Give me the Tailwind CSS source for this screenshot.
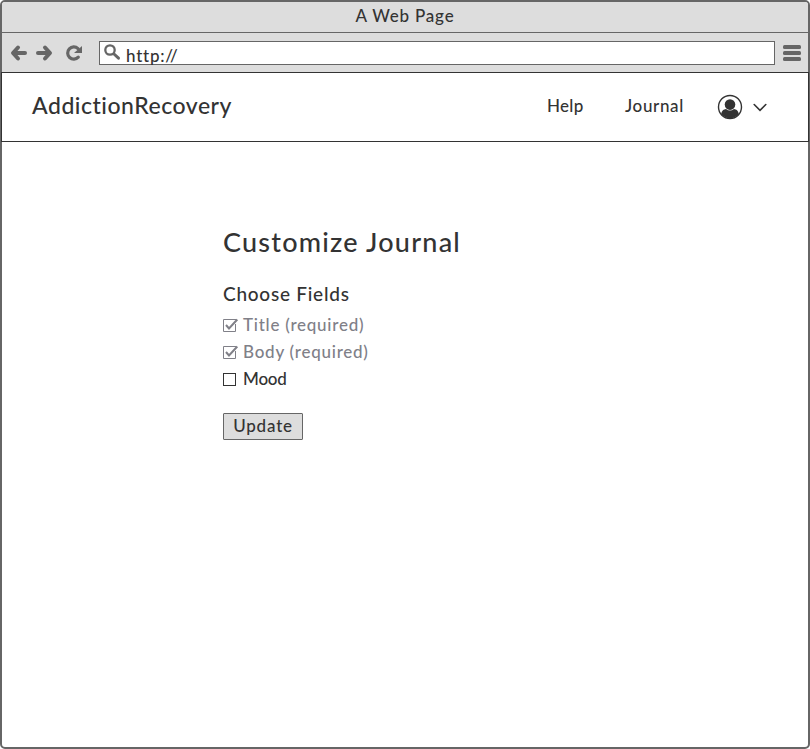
<!DOCTYPE html>
<html lang="en">
<head>
<meta charset="utf-8">
<title>A Web Page</title>
<script src="https://cdn.jsdelivr.net/npm/@tailwindcss/browser@4"></script>
</head>
<body class="bg-white font-['Lato','Open_Sans',sans-serif] font-medium text-[#333]">
<div class="flex h-[749px] w-[810px] flex-col rounded-[5px] border-2 border-[#666] bg-white">
  <div class="flex h-[31px] shrink-0 items-center justify-center rounded-t-[3px] border-b border-[#666] bg-[#ddd] pb-[3px] text-[17px] whitespace-nowrap"><span class="tracking-[0.8px]">A Web Page</span></div>
  <div class="flex h-[39px] shrink-0 items-center bg-[#ddd] pl-2 pr-[6px]">
    <svg class="h-[18px] w-[18px]" viewBox="0 0 18 18" fill="none" stroke="#666" stroke-width="4" stroke-linecap="round"><path d="M4 9H15"/><path d="M8 3.5L3 9L8 14.5" stroke-linejoin="round"/></svg>
    <svg class="ml-[7px] h-[18px] w-[18px]" viewBox="0 0 18 18" fill="none" stroke="#666" stroke-width="4" stroke-linecap="round"><path d="M3 9H14"/><path d="M10 3.5L15 9L10 14.5" stroke-linejoin="round"/></svg>
    <svg class="ml-3 h-[18px] w-[18px]" viewBox="0 0 18 18"><path d="M13.3 13.1A6.1 6.1 0 1 1 13 4.6" fill="none" stroke="#666" stroke-width="3.2" stroke-linecap="round"/><path d="M17 2V9H9Z" fill="#666"/></svg>
    <div class="ml-4 flex h-6 w-[676px] items-center border border-[#666] bg-white pl-1">
      <svg class="h-[18px] w-[18px]" viewBox="0 0 18 18" fill="none" stroke="#666"><circle cx="6" cy="6" r="4.7" stroke-width="2.3"/><path d="M10 10L14.5 14.2" stroke-width="3" stroke-linecap="round"/></svg>
      <span class="ml-1 mt-[6px] text-[17px] leading-5 tracking-[0.75px]">http://</span>
    </div>
    <svg class="ml-2 h-[18px] w-[18px]" viewBox="0 0 18 18" fill="#666"><rect y="1" width="18" height="4" rx="1.5"/><rect y="7" width="18" height="4" rx="1.5"/><rect y="13" width="18" height="4" rx="1.5"/></svg>
  </div>
  <header class="-mx-px flex h-[70px] shrink-0 items-center border border-[#333] bg-white pl-[30px] pr-[41px]">
    <span class="pb-[3px] text-[23px] tracking-[0.52px]">AddictionRecovery</span>
    <nav class="ml-auto flex items-center text-[17px]">
      <span class="w-[78px] pb-[2px] tracking-[0.3px]">Help</span>
      <span class="w-[92px] pb-[2px] tracking-[0.65px]">Journal</span>
      <svg class="h-[26px] w-[26px]" viewBox="0 0 26 26"><circle cx="13" cy="13" r="11.5" fill="#fff" stroke="#333" stroke-width="1.4"/><path d="M4.2 20C4.8 16.3 6.7 15.5 9 15Q13 18.2 17 15C19.3 15.5 21.2 16.3 21.8 20A11.2 11.2 0 0 1 4.2 20Z" fill="#333"/><circle cx="13" cy="10.6" r="5.3" fill="#333"/></svg>
      <svg class="ml-[10px] h-[14px] w-[14px]" viewBox="0 0 14 14" fill="none" stroke="#333" stroke-width="1.6" stroke-linecap="round"><path d="M1.2 4.5L7 10.3L12.8 4.5"/></svg>
    </nav>
  </header>
  <main class="flex flex-col items-start pl-[221px] pt-[82px] whitespace-nowrap">
    <h1 class="h-9 text-[27px] leading-9 tracking-[1.22px]">Customize Journal</h1>
    <h2 class="mt-[22px] h-6 text-[19px] leading-6 tracking-[0.75px]">Choose Fields</h2>
    <div class="mt-[5px] flex h-[27px] items-center text-[17px] text-[#808088]">
      <svg class="h-4 w-[20px]" viewBox="0 0 20 16" fill="none" stroke="#808088"><path d="M12.5 7V14.5H.5V2.5H13"/><path d="M3 8L6 11.5L14.3 2.5" stroke-width="2"/></svg>
      <span class="tracking-[0.75px]">Title (required)</span>
    </div>
    <div class="flex h-[27px] items-center text-[17px] text-[#808088]">
      <svg class="h-4 w-[20px]" viewBox="0 0 20 16" fill="none" stroke="#808088"><path d="M12.5 7V14.5H.5V2.5H13"/><path d="M3 8L6 11.5L14.3 2.5" stroke-width="2"/></svg>
      <span class="tracking-[0.75px]">Body (required)</span>
    </div>
    <div class="flex h-[27px] items-center text-[17px]">
      <svg class="h-4 w-[20px]" viewBox="0 0 20 16" fill="none" stroke="#333"><rect x=".5" y="2.5" width="12" height="12"/></svg>
      <span class="tracking-[-0.2px]">Mood</span>
    </div>
    <button class="mt-[21px] flex h-[27px] w-20 items-center justify-center rounded-[1px] border border-[#666] bg-[#ddd] pb-px text-[17px]"><span class="tracking-[0.8px]">Update</span></button>
  </main>
</div>
</body>
</html>
